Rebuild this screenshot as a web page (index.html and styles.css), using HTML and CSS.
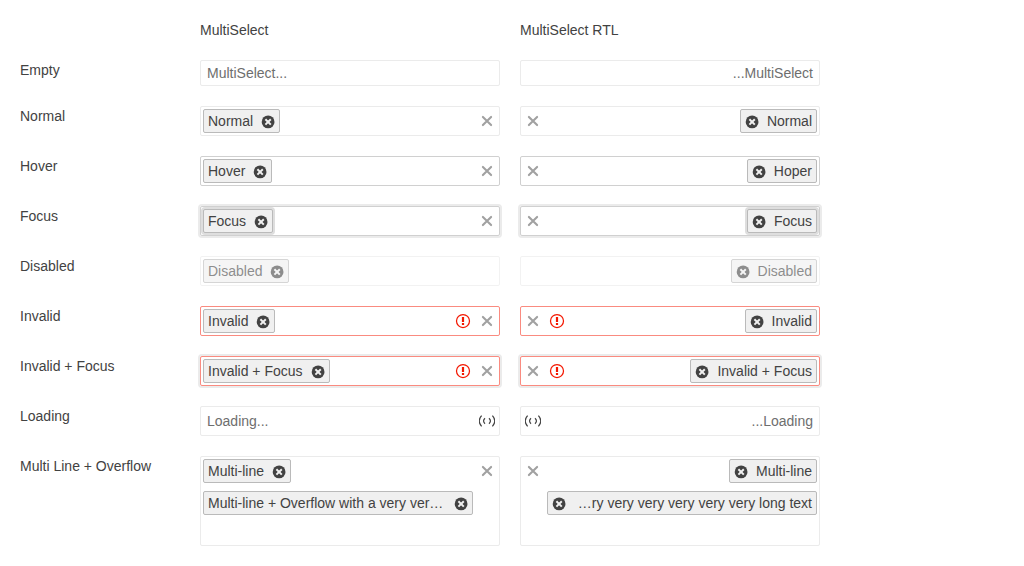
FILE: index.html
```html
<!DOCTYPE html>
<html lang="en">
<head>
<meta charset="utf-8">
<title>MultiSelect</title>
<link rel="stylesheet" href="styles.css">
</head>
<body>
<svg class="defs" width="0" height="0">
  <symbol id="remove" viewBox="0 0 16 16">
    <circle cx="8.1" cy="7.9" r="6.4" fill="currentColor"/>
    <path d="M5.4 5.2l5.4 5.4M10.8 5.2l-5.4 5.4" stroke="#f0f0f0" stroke-width="2"/>
  </symbol>
  <symbol id="clear" viewBox="0 0 16 16">
    <path d="M3.9 3.9l8.2 8.2M12.1 3.9l-8.2 8.2" stroke="currentColor" stroke-width="2.1" stroke-linecap="round"/>
  </symbol>
  <symbol id="error" viewBox="0 0 16 16">
    <circle cx="8" cy="8" r="6.5" fill="none" stroke="currentColor" stroke-width="1.25"/>
    <path d="M8 4v5M8 10v2" stroke="currentColor" stroke-width="2.2"/>
  </symbol>
  <symbol id="loading" viewBox="0 0 16 16">
    <path d="M2.6 2.7Q-2.2 8 2.6 13.3M13.4 2.7Q18.2 8 13.4 13.3M6 5.3Q3.1 8 6 10.7M10 5.3Q12.9 8 10 10.7" fill="none" stroke="currentColor" stroke-width="1.2"/>
  </symbol>
</svg>
<main class="grid">
  <span></span>
  <span>MultiSelect</span>
  <span>MultiSelect RTL</span>

  <span>Empty</span>
  <div class="select empty"><span class="placeholder">MultiSelect...</span></div>
  <div class="select empty rtl"><span class="placeholder">...MultiSelect</span></div>

  <span>Normal</span>
  <div class="select"><div class="chips"><div class="chip"><span class="text">Normal</span><svg class="remove"><use href="#remove"/></svg></div></div><svg class="clear"><use href="#clear"/></svg></div>
  <div class="select rtl"><div class="chips"><div class="chip"><span class="text">Normal</span><svg class="remove"><use href="#remove"/></svg></div></div><svg class="clear"><use href="#clear"/></svg></div>

  <span>Hover</span>
  <div class="select hover"><div class="chips"><div class="chip"><span class="text">Hover</span><svg class="remove"><use href="#remove"/></svg></div></div><svg class="clear"><use href="#clear"/></svg></div>
  <div class="select hover rtl"><div class="chips"><div class="chip"><span class="text">Hoper</span><svg class="remove"><use href="#remove"/></svg></div></div><svg class="clear"><use href="#clear"/></svg></div>

  <span>Focus</span>
  <div class="select hover focus"><div class="chips"><div class="chip focus"><span class="text">Focus</span><svg class="remove"><use href="#remove"/></svg></div></div><svg class="clear"><use href="#clear"/></svg></div>
  <div class="select hover focus rtl"><div class="chips"><div class="chip focus"><span class="text">Focus</span><svg class="remove"><use href="#remove"/></svg></div></div><svg class="clear"><use href="#clear"/></svg></div>

  <span>Disabled</span>
  <div class="select disabled"><div class="chips"><div class="chip"><span class="text">Disabled</span><svg class="remove"><use href="#remove"/></svg></div></div></div>
  <div class="select disabled rtl"><div class="chips"><div class="chip"><span class="text">Disabled</span><svg class="remove"><use href="#remove"/></svg></div></div></div>

  <span>Invalid</span>
  <div class="select invalid"><div class="chips"><div class="chip"><span class="text">Invalid</span><svg class="remove"><use href="#remove"/></svg></div></div><svg class="error"><use href="#error"/></svg><svg class="clear"><use href="#clear"/></svg></div>
  <div class="select invalid rtl"><div class="chips"><div class="chip"><span class="text">Invalid</span><svg class="remove"><use href="#remove"/></svg></div></div><svg class="error"><use href="#error"/></svg><svg class="clear"><use href="#clear"/></svg></div>

  <span>Invalid + Focus</span>
  <div class="select invalid focus"><div class="chips"><div class="chip"><span class="text">Invalid + Focus</span><svg class="remove"><use href="#remove"/></svg></div></div><svg class="error"><use href="#error"/></svg><svg class="clear"><use href="#clear"/></svg></div>
  <div class="select invalid focus rtl"><div class="chips"><div class="chip"><span class="text">Invalid + Focus</span><svg class="remove"><use href="#remove"/></svg></div></div><svg class="error"><use href="#error"/></svg><svg class="clear"><use href="#clear"/></svg></div>

  <span>Loading</span>
  <div class="select"><span class="placeholder">Loading...</span><svg class="loading"><use href="#loading"/></svg></div>
  <div class="select rtl"><span class="placeholder">...Loading</span><svg class="loading"><use href="#loading"/></svg></div>

  <span>Multi Line + Overflow</span>
  <div class="select multi"><div class="chips"><div class="chip"><span class="text">Multi-line</span><svg class="remove"><use href="#remove"/></svg></div><div class="chip long"><span class="text">Multi-line + Overflow with a very ver…</span><svg class="remove"><use href="#remove"/></svg></div></div><svg class="clear"><use href="#clear"/></svg></div>
  <div class="select multi rtl"><div class="chips"><div class="chip"><span class="text">Multi-line</span><svg class="remove"><use href="#remove"/></svg></div><div class="chip long"><span class="text">…ry very very very very very long text</span><svg class="remove"><use href="#remove"/></svg></div></div><svg class="clear"><use href="#clear"/></svg></div>
</main>
</body>
</html>
```
FILE: styles.css
```css
* {
  box-sizing: border-box;
}

body {
  margin: 0;
  background: #fff;
  color: #424242;
  font: 14px/20px "Liberation Sans", Arial, sans-serif;
}

.defs {
  position: absolute;
}

.grid {
  display: grid;
  grid-template-columns: 160px 300px 300px;
  gap: 20px;
  padding: 20px;
}

.select {
  display: flex;
  align-items: flex-start;
  height: 30px;
  padding: 2px;
  border: 1px solid #ebebeb;
  border-radius: 2px;
}

.rtl,
.rtl .chip {
  flex-direction: row-reverse;
}

.empty {
  height: 26px;
}

.placeholder {
  flex: 1;
  padding: 0 4px;
  line-height: 24px;
  color: #6e6e6e;
}

.empty .placeholder {
  line-height: 20px;
}

.rtl .placeholder {
  text-align: right;
}

.chips {
  display: flex;
  flex: 1;
  flex-direction: column;
  align-items: flex-start;
  gap: 8px;
}

.rtl .chips {
  align-items: flex-end;
}

.chip {
  display: flex;
  height: 24px;
  padding: 0 3px 0 4px;
  gap: 7px;
  border: 1px solid #bababa;
  border-radius: 2px;
  background: #f0f0f0;
  line-height: 22px;
  white-space: nowrap;
}

.rtl .chip {
  padding: 0 4px 0 3px;
}

.long {
  width: 270px;
}

.long .text {
  flex: 1;
}

.rtl .text {
  text-align: right;
}

svg {
  flex: none;
  width: 16px;
  height: 16px;
}

.remove {
  margin-top: 4px;
}

.clear,
.error,
.loading {
  margin: 4px 2px 0;
}

.clear {
  color: #a1a1a1;
}

.error {
  margin-right: 6px;
  color: #f31700;
}

.rtl .error {
  margin: 4px 2px 0 6px;
}

.hover {
  border-color: #d0d0d0;
}

.focus {
  box-shadow: 0 0 0 2px #ebebeb;
}

.chip.focus {
  box-shadow: 0 0 0 2px #dedede;
}

.invalid {
  border-color: #fa8b80;
}

.disabled {
  opacity: 0.6;
}

.multi {
  height: 90px;
}
```
